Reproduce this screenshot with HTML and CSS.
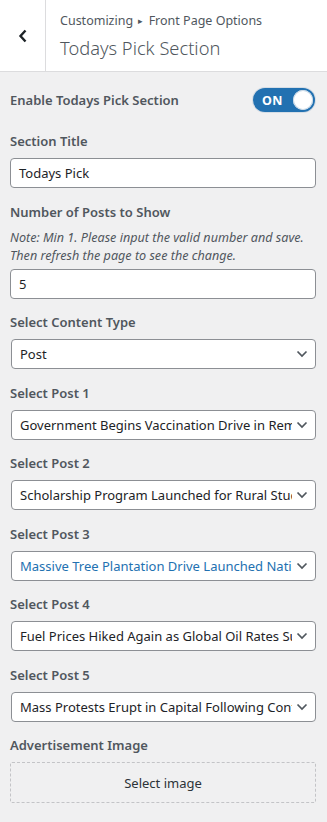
FILE: index.html
```html
<!DOCTYPE html>
<html>
<head>
<meta charset="utf-8">
<link rel="stylesheet" href="styles.css">
</head>
<body>
<header class="head">
  <button class="back" aria-label="Back">
    <svg width="10" height="14" viewBox="0 0 10 14"><path d="M7.5 1.5 L2.5 7 L7.5 12.5" fill="none" stroke="#1d2327" stroke-width="2.4"/></svg>
  </button>
  <div class="titles">
    <div class="crumb">Customizing <span class="tri">&#9656;</span> Front Page Options</div>
    <div class="title">Todays Pick Section</div>
  </div>
</header>
<main class="panel">
  <div class="row-toggle">
    <span class="label">Enable Todays Pick Section</span>
    <span class="toggle"><span class="on">ON</span><span class="knob"></span></span>
  </div>

  <div class="control">
    <div class="label">Section Title</div>
    <div class="input">Todays Pick</div>
  </div>

  <div class="control">
    <div class="label">Number of Posts to Show</div>
    <div class="note">Note: Min 1. Please input the valid number and save. Then refresh the page to see the change.</div>
    <div class="input">5</div>
  </div>

  <div class="control">
    <div class="label">Select Content Type</div>
    <div class="select"><span class="val">Post</span><svg class="chev" width="12" height="8" viewBox="0 0 12 8"><path d="M1.5 1.5 L6 6 L10.5 1.5" fill="none" stroke="#50575e" stroke-width="1.7"/></svg></div>
  </div>

  <div class="control">
    <div class="label">Select Post 1</div>
    <div class="select"><span class="val">Government Begins Vaccination Drive in Remote Areas</span><svg class="chev" width="12" height="8" viewBox="0 0 12 8"><path d="M1.5 1.5 L6 6 L10.5 1.5" fill="none" stroke="#50575e" stroke-width="1.7"/></svg></div>
  </div>

  <div class="control">
    <div class="label">Select Post 2</div>
    <div class="select"><span class="val">Scholarship Program Launched for Rural Students</span><svg class="chev" width="12" height="8" viewBox="0 0 12 8"><path d="M1.5 1.5 L6 6 L10.5 1.5" fill="none" stroke="#50575e" stroke-width="1.7"/></svg></div>
  </div>

  <div class="control">
    <div class="label">Select Post 3</div>
    <div class="select hover"><span class="val">Massive Tree Plantation Drive Launched Nationwide</span><svg class="chev" width="12" height="8" viewBox="0 0 12 8"><path d="M1.5 1.5 L6 6 L10.5 1.5" fill="none" stroke="#50575e" stroke-width="1.7"/></svg></div>
  </div>

  <div class="control">
    <div class="label">Select Post 4</div>
    <div class="select"><span class="val">Fuel Prices Hiked Again as Global Oil Rates Surge</span><svg class="chev" width="12" height="8" viewBox="0 0 12 8"><path d="M1.5 1.5 L6 6 L10.5 1.5" fill="none" stroke="#50575e" stroke-width="1.7"/></svg></div>
  </div>

  <div class="control">
    <div class="label">Select Post 5</div>
    <div class="select"><span class="val">Mass Protests Erupt in Capital Following Controversial Bill</span><svg class="chev" width="12" height="8" viewBox="0 0 12 8"><path d="M1.5 1.5 L6 6 L10.5 1.5" fill="none" stroke="#50575e" stroke-width="1.7"/></svg></div>
  </div>

  <div class="control">
    <div class="label">Advertisement Image</div>
    <div class="dropzone">Select image</div>
  </div>
</main>
</body>
</html>
```
FILE: styles.css
```css
* { box-sizing: border-box; }
html, body { margin: 0; padding: 0; }
body {
  background: #f0f0f1;
  font-family: "Noto Sans", "Liberation Sans", sans-serif;
  font-size: 13px;
  color: #1d2327;
  width: 327px;
  height: 822px;
  overflow: hidden;
}
.head {
  display: flex;
  height: 72px;
  background: #fff;
  border-bottom: 1px solid #dcdcde;
}
.back {
  width: 46px;
  border: 0;
  border-right: 1px solid #dcdcde;
  background: #fff;
  display: flex;
  align-items: center;
  justify-content: center;
  padding: 0;
}
.titles {
  padding: 12px 0 0 14px;
}
.crumb {
  font-size: 12.5px;
  color: #50575e;
  line-height: 18px;
}
.tri { font-size: 9px; position: relative; top: -1px; margin: 0 2px; }
.title {
  font-size: 18.3px;
  font-weight: 300;
  color: #50575e;
  line-height: 26px;
  margin-top: 4px;
}
.panel {
  padding: 15px 11px 0 10px;
}
.label {
  font-weight: 600;
  font-size: 13px;
  color: #50575e;
  line-height: 20px;
}
.row-toggle {
  display: flex;
  justify-content: space-between;
  align-items: center;
  height: 26px;
  margin-bottom: 18px;
}
.toggle {
  width: 62px;
  height: 24px;
  border-radius: 12px;
  background: #2271b1;
  box-shadow: 0 0 0 1px #d5dde5;
  display: flex;
  align-items: center;
  justify-content: space-between;
  padding: 0 2px 0 9px;
  margin-right: 1px;
}
.on {
  color: #fff;
  font-weight: 700;
  font-size: 12.5px;
  letter-spacing: 0.3px;
}
.knob {
  width: 20px;
  height: 20px;
  border-radius: 50%;
  background: #fff;
  box-shadow: inset 0 0 0 1px #c8d8e6;
}
.control { margin-bottom: 13.5px; }
.control .label { margin-bottom: 7px; }
.note {
  font-style: italic;
  font-size: 12.6px;
  color: #50575e;
  line-height: 18px;
  margin-top: 1px;
  margin-bottom: 4px;
}
.input, .select {
  height: 30px;
  background: #fff;
  border: 1px solid #8c8f94;
  border-radius: 4px;
  font-size: 13px;
  line-height: 28px;
  padding: 0 8px;
  color: #1d2327;
}
.select {
  display: flex;
  align-items: center;
  padding: 0 7px 0 8px;
  margin-left: 1px;
}
.select .val {
  flex: 1;
  white-space: nowrap;
  overflow: hidden;
  min-width: 0;
}
.select.hover { color: #2271b1; }
.chev { flex: none; margin-left: 4px; }
.dropzone {
  height: 41px;
  border: 1px dashed #c3c4c7;
  border-radius: 2px;
  display: flex;
  align-items: center;
  justify-content: center;
  font-size: 13px;
  color: #2c3338;
}
```
